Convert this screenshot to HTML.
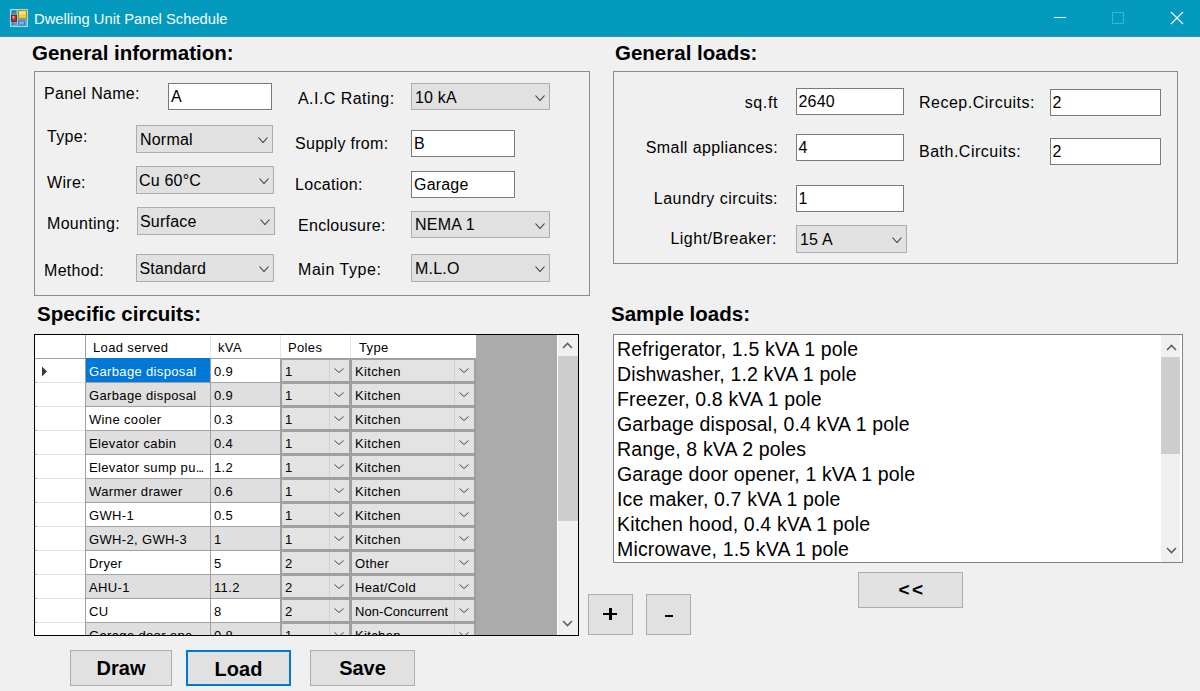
<!DOCTYPE html>
<html><head><meta charset="utf-8">
<style>
*{box-sizing:border-box;margin:0;padding:0}
html,body{width:1200px;height:691px;overflow:hidden;background:#f0f0f0;font-family:"Liberation Sans",sans-serif;color:#000}
.a{position:absolute;white-space:nowrap;line-height:1.15}
.h{font-weight:bold;font-size:20.5px}
.grp{border:1px solid #8c8c8c}
.tb{background:#fff;border:1px solid #7a7a7a}
.cb{background:#e1e1e1;border:1px solid #adadad}
.btn{background:#e1e1e1;border:1px solid #adadad;font-weight:bold;text-align:center}
.focus{border:2px solid #0078d7}
.gc{position:absolute;font-size:13px;letter-spacing:.35px;line-height:1.15;white-space:nowrap;overflow:hidden}
</style></head><body>

<div class="a" style="left:0;top:0;width:1200px;height:36px;background:#049abd"></div>
<div class="a" style="left:0;top:36px;width:1200px;height:1px;background:#3f8ea3"></div>
<div class="a" style="left:0;top:37px;width:1200px;height:1px;background:#d6fafd"></div>
<svg class="a" style="left:9px;top:8px" width="20" height="20">
<rect x="1" y="1" width="18" height="18" fill="#4fb3d1"/>
<rect x="1.5" y="1.5" width="17" height="17" fill="none" stroke="#9fd9ea" stroke-width="1.1"/>
<path d="M8.5 2V18M2 6.5H8.5M2 13.5H18" stroke="#8ccfe3" stroke-width="1"/>
<rect x="3" y="2.5" width="4" height="3" fill="#1d8db3"/>
<rect x="9.5" y="2.5" width="8" height="8" fill="#f4cb3c" stroke="#b48d1c" stroke-width="1"/>
<rect x="10.5" y="3.5" width="6" height="3" fill="#fde48c"/>
<rect x="2.5" y="7" width="5" height="6.5" fill="#b92c28" stroke="#7e1715" stroke-width=".9"/>
<rect x="3.5" y="8" width="2" height="2.5" fill="#f59a93"/>
<rect x="9.5" y="13" width="6" height="4" fill="#80a9f2" stroke="#4a6cc0" stroke-width=".9"/>
<rect x="3" y="15" width="2" height="2" fill="#1d8db3"/>
<rect x="6" y="15" width="2" height="2" fill="#5aa0b8"/>
<rect x="16.5" y="13" width="1.5" height="4" fill="#6aaec6"/>
</svg>
<div class="a" style="left:34px;top:11px;font-size:14.75px;color:#f4fcff">Dwelling Unit Panel Schedule</div>
<div class="a" style="left:1054px;top:17px;width:12px;height:1px;background:#fff"></div>
<div class="a" style="left:1112px;top:12px;width:12px;height:12px;border:1px solid #3fb3cf"></div>
<svg class="a" style="left:1170px;top:11px" width="14" height="14"><path d="M1 1L13 13M13 1L1 13" stroke="#fff" stroke-width="1.1"/></svg>
<div class="a h" style="left:32px;top:41px">General information:</div>
<div class="a grp" style="left:34px;top:71px;width:556px;height:225px"></div>
<div class="a" style="left:44px;top:85px;font-size:16px;letter-spacing:0.3px;">Panel Name:</div>
<div class="a tb" style="left:168px;top:83px;width:104px;height:27px"><span class="a" style="left:2px;top:4px;font-size:16px;letter-spacing:.2px">A</span></div>
<div class="a" style="left:47px;top:128px;font-size:16px;letter-spacing:0.3px;">Type:</div>
<div class="a cb" style="left:136px;top:125px;width:137px;height:28px"><span class="a" style="left:3px;top:5px;font-size:16px;letter-spacing:.2px">Normal</span><div class="a" style="left:121px;top:11px"><svg width="10" height="6" style="display:block"><path d="M.5 .5L5.0 5.5L9.5 .5" fill="none" stroke="#3a3a3a" stroke-width="1.1"/></svg></div></div>
<div class="a" style="left:47px;top:174px;font-size:16px;letter-spacing:0.3px;">Wire:</div>
<div class="a cb" style="left:136px;top:166px;width:138px;height:28px"><span class="a" style="left:2px;top:5px;font-size:16px;letter-spacing:.2px">Cu 60°C</span><div class="a" style="left:122px;top:11px"><svg width="10" height="6" style="display:block"><path d="M.5 .5L5.0 5.5L9.5 .5" fill="none" stroke="#3a3a3a" stroke-width="1.1"/></svg></div></div>
<div class="a" style="left:47px;top:215px;font-size:16px;letter-spacing:0.3px;">Mounting:</div>
<div class="a cb" style="left:137px;top:207px;width:138px;height:28px"><span class="a" style="left:2px;top:5px;font-size:16px;letter-spacing:.2px">Surface</span><div class="a" style="left:122px;top:11px"><svg width="10" height="6" style="display:block"><path d="M.5 .5L5.0 5.5L9.5 .5" fill="none" stroke="#3a3a3a" stroke-width="1.1"/></svg></div></div>
<div class="a" style="left:44px;top:262px;font-size:16px;letter-spacing:0.3px;">Method:</div>
<div class="a cb" style="left:136px;top:254px;width:138px;height:28px"><span class="a" style="left:2.5px;top:5px;font-size:16px;letter-spacing:.2px">Standard</span><div class="a" style="left:122px;top:11px"><svg width="10" height="6" style="display:block"><path d="M.5 .5L5.0 5.5L9.5 .5" fill="none" stroke="#3a3a3a" stroke-width="1.1"/></svg></div></div>
<div class="a" style="left:298px;top:90px;font-size:16px;letter-spacing:0.45px;">A.I.C Rating:</div>
<div class="a cb" style="left:411px;top:83px;width:139px;height:27px"><span class="a" style="left:3px;top:5px;font-size:16px;letter-spacing:.2px">10 kA</span><div class="a" style="left:123px;top:11px"><svg width="10" height="6" style="display:block"><path d="M.5 .5L5.0 5.5L9.5 .5" fill="none" stroke="#3a3a3a" stroke-width="1.1"/></svg></div></div>
<div class="a" style="left:295px;top:135px;font-size:16px;letter-spacing:0.3px;">Supply from:</div>
<div class="a tb" style="left:411px;top:130px;width:104px;height:27px"><span class="a" style="left:2px;top:4px;font-size:16px;letter-spacing:.2px">B</span></div>
<div class="a" style="left:295px;top:176px;font-size:16px;letter-spacing:0.3px;">Location:</div>
<div class="a tb" style="left:411px;top:171px;width:104px;height:27px"><span class="a" style="left:2px;top:4px;font-size:16px;letter-spacing:.2px">Garage</span></div>
<div class="a" style="left:298px;top:217px;font-size:16px;letter-spacing:0.3px;">Enclousure:</div>
<div class="a cb" style="left:411px;top:211px;width:139px;height:27px"><span class="a" style="left:3px;top:4px;font-size:16px;letter-spacing:.2px">NEMA 1</span><div class="a" style="left:123px;top:11px"><svg width="10" height="6" style="display:block"><path d="M.5 .5L5.0 5.5L9.5 .5" fill="none" stroke="#3a3a3a" stroke-width="1.1"/></svg></div></div>
<div class="a" style="left:298px;top:261px;font-size:16px;letter-spacing:0.55px;">Main Type:</div>
<div class="a cb" style="left:411px;top:254px;width:139px;height:28px"><span class="a" style="left:3px;top:5px;font-size:16px;letter-spacing:.2px">M.L.O</span><div class="a" style="left:123px;top:11px"><svg width="10" height="6" style="display:block"><path d="M.5 .5L5.0 5.5L9.5 .5" fill="none" stroke="#3a3a3a" stroke-width="1.1"/></svg></div></div>
<div class="a h" style="left:615px;top:41px">General loads:</div>
<div class="a grp" style="left:613px;top:71px;width:565px;height:193px"></div>
<div class="a" style="right:422px;top:94px;font-size:16px;letter-spacing:0.6px">sq.ft</div>
<div class="a tb" style="left:796px;top:88px;width:108px;height:27px"><span class="a" style="left:1.5px;top:4px;font-size:16px;letter-spacing:.2px">2640</span></div>
<div class="a" style="right:422px;top:139px;font-size:16px;letter-spacing:0.4px">Small appliances:</div>
<div class="a tb" style="left:796px;top:134px;width:108px;height:27px"><span class="a" style="left:1.5px;top:4px;font-size:16px;letter-spacing:.2px">4</span></div>
<div class="a" style="right:422px;top:190px;font-size:16px;letter-spacing:0.45px">Laundry circuits:</div>
<div class="a tb" style="left:796px;top:185px;width:108px;height:27px"><span class="a" style="left:1.5px;top:4px;font-size:16px;letter-spacing:.2px">1</span></div>
<div class="a" style="right:423px;top:230px;font-size:16px;letter-spacing:0.5px">Light/Breaker:</div>
<div class="a cb" style="left:796px;top:225px;width:111px;height:28px"><span class="a" style="left:3px;top:5px;font-size:16px;letter-spacing:.2px">15 A</span><div class="a" style="left:95px;top:11px"><svg width="10" height="6" style="display:block"><path d="M.5 .5L5.0 5.5L9.5 .5" fill="none" stroke="#3a3a3a" stroke-width="1.1"/></svg></div></div>
<div class="a" style="left:919px;top:94px;font-size:16px;letter-spacing:0.5px;">Recep.Circuits:</div>
<div class="a tb" style="left:1050px;top:89px;width:111px;height:27px"><span class="a" style="left:1.5px;top:4px;font-size:16px;letter-spacing:.2px">2</span></div>
<div class="a" style="left:919px;top:143px;font-size:16px;letter-spacing:0.5px;">Bath.Circuits:</div>
<div class="a tb" style="left:1050px;top:138px;width:111px;height:27px"><span class="a" style="left:1.5px;top:4px;font-size:16px;letter-spacing:.2px">2</span></div>
<div class="a h" style="left:37px;top:302px">Specific circuits:</div>
<div class="a" style="left:34px;top:334px;width:545px;height:302px;border:1px solid #000;background:#ababab;overflow:hidden"><div class="a" style="left:0px;top:0px;width:441px;height:23px;background:#fff"></div><div class="a" style="left:0px;top:23px;width:441px;height:1px;background:#a0a0a0"></div><div class="a" style="left:50px;top:0px;width:1px;height:23px;background:#a0a0a0"></div><div class="a" style="left:175px;top:0px;width:1px;height:23px;background:#e5e5e5"></div><div class="a" style="left:245px;top:0px;width:1px;height:23px;background:#e5e5e5"></div><div class="a" style="left:315px;top:0px;width:1px;height:23px;background:#e5e5e5"></div><div class="gc" style="left:58px;top:6px;color:#000;">Load served</div><div class="gc" style="left:183px;top:6px;color:#000;">kVA</div><div class="gc" style="left:253px;top:6px;color:#000;">Poles</div><div class="gc" style="left:324px;top:6px;color:#000;">Type</div><div class="a" style="left:0px;top:24px;width:50px;height:23px;background:#fff"></div><div class="a" style="left:2px;top:47px;width:48px;height:1px;background:#e3e3e3"></div><div class="a" style="left:50px;top:24px;width:1px;height:24px;background:#a0a0a0"></div><div class="a" style="left:51px;top:23px;width:124px;height:24px;background:#0078d7"></div><div class="gc" style="left:54px;top:30px;color:#fff;">Garbage disposal</div><div class="a" style="left:51px;top:47px;width:390px;height:1px;background:#a0a0a0"></div><div class="a" style="left:175px;top:24px;width:1px;height:24px;background:#a0a0a0"></div><div class="a" style="left:176px;top:24px;width:69px;height:23px;background:#fff"></div><div class="gc" style="left:179px;top:30px;color:#000;">0.9</div><div class="a" style="left:245px;top:24px;width:1px;height:24px;background:#a0a0a0"></div><div class="a" style="left:315px;top:24px;width:1px;height:24px;background:#a0a0a0"></div><div class="a" style="left:440px;top:24px;width:1px;height:24px;background:#a0a0a0"></div><div class="a" style="left:246px;top:24px;width:69px;height:23px;background:#e3e3e3;border:1px solid #a0a0a0"></div><div class="a" style="left:294px;top:25px;width:1px;height:21px;background:#cfcfcf"></div><div class="gc" style="left:250px;top:30px;color:#000;">1</div><div class="a" style="left:299px;top:33px"><svg width="10" height="5" style="display:block"><path d="M.5 .5L5.0 4.5L9.5 .5" fill="none" stroke="#444" stroke-width="1"/></svg></div><div class="a" style="left:316px;top:24px;width:124px;height:23px;background:#e3e3e3;border:1px solid #a0a0a0"></div><div class="a" style="left:419px;top:25px;width:1px;height:21px;background:#cfcfcf"></div><div class="gc" style="left:320px;top:30px;color:#000;">Kitchen</div><div class="a" style="left:424px;top:33px"><svg width="10" height="5" style="display:block"><path d="M.5 .5L5.0 4.5L9.5 .5" fill="none" stroke="#444" stroke-width="1"/></svg></div><svg class="a" style="left:7px;top:31px" width="6" height="11"><path d="M0 .5L5 5.5L0 10.5Z" fill="#3c3c3c"/></svg><div class="a" style="left:0px;top:48px;width:50px;height:23px;background:#fff"></div><div class="a" style="left:2px;top:71px;width:48px;height:1px;background:#e3e3e3"></div><div class="a" style="left:50px;top:48px;width:1px;height:24px;background:#a0a0a0"></div><div class="a" style="left:51px;top:48px;width:124px;height:23px;background:#dfdfdf"></div><div class="gc" style="left:54px;top:54px;color:#000;width:118px;">Garbage disposal</div><div class="a" style="left:51px;top:71px;width:390px;height:1px;background:#a0a0a0"></div><div class="a" style="left:175px;top:48px;width:1px;height:24px;background:#a0a0a0"></div><div class="a" style="left:176px;top:48px;width:69px;height:23px;background:#dfdfdf"></div><div class="gc" style="left:179px;top:54px;color:#000;">0.9</div><div class="a" style="left:245px;top:48px;width:1px;height:24px;background:#a0a0a0"></div><div class="a" style="left:315px;top:48px;width:1px;height:24px;background:#a0a0a0"></div><div class="a" style="left:440px;top:48px;width:1px;height:24px;background:#a0a0a0"></div><div class="a" style="left:246px;top:48px;width:69px;height:23px;background:#e3e3e3;border:1px solid #a0a0a0"></div><div class="a" style="left:294px;top:49px;width:1px;height:21px;background:#cfcfcf"></div><div class="gc" style="left:250px;top:54px;color:#000;">1</div><div class="a" style="left:299px;top:57px"><svg width="10" height="5" style="display:block"><path d="M.5 .5L5.0 4.5L9.5 .5" fill="none" stroke="#444" stroke-width="1"/></svg></div><div class="a" style="left:316px;top:48px;width:124px;height:23px;background:#e3e3e3;border:1px solid #a0a0a0"></div><div class="a" style="left:419px;top:49px;width:1px;height:21px;background:#cfcfcf"></div><div class="gc" style="left:320px;top:54px;color:#000;">Kitchen</div><div class="a" style="left:424px;top:57px"><svg width="10" height="5" style="display:block"><path d="M.5 .5L5.0 4.5L9.5 .5" fill="none" stroke="#444" stroke-width="1"/></svg></div><div class="a" style="left:0px;top:72px;width:50px;height:23px;background:#fff"></div><div class="a" style="left:2px;top:95px;width:48px;height:1px;background:#e3e3e3"></div><div class="a" style="left:50px;top:72px;width:1px;height:24px;background:#a0a0a0"></div><div class="a" style="left:51px;top:72px;width:124px;height:23px;background:#fff"></div><div class="gc" style="left:54px;top:78px;color:#000;width:118px;">Wine cooler</div><div class="a" style="left:51px;top:95px;width:390px;height:1px;background:#a0a0a0"></div><div class="a" style="left:175px;top:72px;width:1px;height:24px;background:#a0a0a0"></div><div class="a" style="left:176px;top:72px;width:69px;height:23px;background:#fff"></div><div class="gc" style="left:179px;top:78px;color:#000;">0.3</div><div class="a" style="left:245px;top:72px;width:1px;height:24px;background:#a0a0a0"></div><div class="a" style="left:315px;top:72px;width:1px;height:24px;background:#a0a0a0"></div><div class="a" style="left:440px;top:72px;width:1px;height:24px;background:#a0a0a0"></div><div class="a" style="left:246px;top:72px;width:69px;height:23px;background:#e3e3e3;border:1px solid #a0a0a0"></div><div class="a" style="left:294px;top:73px;width:1px;height:21px;background:#cfcfcf"></div><div class="gc" style="left:250px;top:78px;color:#000;">1</div><div class="a" style="left:299px;top:81px"><svg width="10" height="5" style="display:block"><path d="M.5 .5L5.0 4.5L9.5 .5" fill="none" stroke="#444" stroke-width="1"/></svg></div><div class="a" style="left:316px;top:72px;width:124px;height:23px;background:#e3e3e3;border:1px solid #a0a0a0"></div><div class="a" style="left:419px;top:73px;width:1px;height:21px;background:#cfcfcf"></div><div class="gc" style="left:320px;top:78px;color:#000;">Kitchen</div><div class="a" style="left:424px;top:81px"><svg width="10" height="5" style="display:block"><path d="M.5 .5L5.0 4.5L9.5 .5" fill="none" stroke="#444" stroke-width="1"/></svg></div><div class="a" style="left:0px;top:96px;width:50px;height:23px;background:#fff"></div><div class="a" style="left:2px;top:119px;width:48px;height:1px;background:#e3e3e3"></div><div class="a" style="left:50px;top:96px;width:1px;height:24px;background:#a0a0a0"></div><div class="a" style="left:51px;top:96px;width:124px;height:23px;background:#dfdfdf"></div><div class="gc" style="left:54px;top:102px;color:#000;width:118px;">Elevator cabin</div><div class="a" style="left:51px;top:119px;width:390px;height:1px;background:#a0a0a0"></div><div class="a" style="left:175px;top:96px;width:1px;height:24px;background:#a0a0a0"></div><div class="a" style="left:176px;top:96px;width:69px;height:23px;background:#dfdfdf"></div><div class="gc" style="left:179px;top:102px;color:#000;">0.4</div><div class="a" style="left:245px;top:96px;width:1px;height:24px;background:#a0a0a0"></div><div class="a" style="left:315px;top:96px;width:1px;height:24px;background:#a0a0a0"></div><div class="a" style="left:440px;top:96px;width:1px;height:24px;background:#a0a0a0"></div><div class="a" style="left:246px;top:96px;width:69px;height:23px;background:#e3e3e3;border:1px solid #a0a0a0"></div><div class="a" style="left:294px;top:97px;width:1px;height:21px;background:#cfcfcf"></div><div class="gc" style="left:250px;top:102px;color:#000;">1</div><div class="a" style="left:299px;top:105px"><svg width="10" height="5" style="display:block"><path d="M.5 .5L5.0 4.5L9.5 .5" fill="none" stroke="#444" stroke-width="1"/></svg></div><div class="a" style="left:316px;top:96px;width:124px;height:23px;background:#e3e3e3;border:1px solid #a0a0a0"></div><div class="a" style="left:419px;top:97px;width:1px;height:21px;background:#cfcfcf"></div><div class="gc" style="left:320px;top:102px;color:#000;">Kitchen</div><div class="a" style="left:424px;top:105px"><svg width="10" height="5" style="display:block"><path d="M.5 .5L5.0 4.5L9.5 .5" fill="none" stroke="#444" stroke-width="1"/></svg></div><div class="a" style="left:0px;top:120px;width:50px;height:23px;background:#fff"></div><div class="a" style="left:2px;top:143px;width:48px;height:1px;background:#e3e3e3"></div><div class="a" style="left:50px;top:120px;width:1px;height:24px;background:#a0a0a0"></div><div class="a" style="left:51px;top:120px;width:124px;height:23px;background:#fff"></div><div class="gc" style="left:54px;top:126px;color:#000;width:118px;">Elevator sump pu<span style="letter-spacing:-1.2px">...</span></div><div class="a" style="left:51px;top:143px;width:390px;height:1px;background:#a0a0a0"></div><div class="a" style="left:175px;top:120px;width:1px;height:24px;background:#a0a0a0"></div><div class="a" style="left:176px;top:120px;width:69px;height:23px;background:#fff"></div><div class="gc" style="left:179px;top:126px;color:#000;">1.2</div><div class="a" style="left:245px;top:120px;width:1px;height:24px;background:#a0a0a0"></div><div class="a" style="left:315px;top:120px;width:1px;height:24px;background:#a0a0a0"></div><div class="a" style="left:440px;top:120px;width:1px;height:24px;background:#a0a0a0"></div><div class="a" style="left:246px;top:120px;width:69px;height:23px;background:#e3e3e3;border:1px solid #a0a0a0"></div><div class="a" style="left:294px;top:121px;width:1px;height:21px;background:#cfcfcf"></div><div class="gc" style="left:250px;top:126px;color:#000;">1</div><div class="a" style="left:299px;top:129px"><svg width="10" height="5" style="display:block"><path d="M.5 .5L5.0 4.5L9.5 .5" fill="none" stroke="#444" stroke-width="1"/></svg></div><div class="a" style="left:316px;top:120px;width:124px;height:23px;background:#e3e3e3;border:1px solid #a0a0a0"></div><div class="a" style="left:419px;top:121px;width:1px;height:21px;background:#cfcfcf"></div><div class="gc" style="left:320px;top:126px;color:#000;">Kitchen</div><div class="a" style="left:424px;top:129px"><svg width="10" height="5" style="display:block"><path d="M.5 .5L5.0 4.5L9.5 .5" fill="none" stroke="#444" stroke-width="1"/></svg></div><div class="a" style="left:0px;top:144px;width:50px;height:23px;background:#fff"></div><div class="a" style="left:2px;top:167px;width:48px;height:1px;background:#e3e3e3"></div><div class="a" style="left:50px;top:144px;width:1px;height:24px;background:#a0a0a0"></div><div class="a" style="left:51px;top:144px;width:124px;height:23px;background:#dfdfdf"></div><div class="gc" style="left:54px;top:150px;color:#000;width:118px;">Warmer drawer</div><div class="a" style="left:51px;top:167px;width:390px;height:1px;background:#a0a0a0"></div><div class="a" style="left:175px;top:144px;width:1px;height:24px;background:#a0a0a0"></div><div class="a" style="left:176px;top:144px;width:69px;height:23px;background:#dfdfdf"></div><div class="gc" style="left:179px;top:150px;color:#000;">0.6</div><div class="a" style="left:245px;top:144px;width:1px;height:24px;background:#a0a0a0"></div><div class="a" style="left:315px;top:144px;width:1px;height:24px;background:#a0a0a0"></div><div class="a" style="left:440px;top:144px;width:1px;height:24px;background:#a0a0a0"></div><div class="a" style="left:246px;top:144px;width:69px;height:23px;background:#e3e3e3;border:1px solid #a0a0a0"></div><div class="a" style="left:294px;top:145px;width:1px;height:21px;background:#cfcfcf"></div><div class="gc" style="left:250px;top:150px;color:#000;">1</div><div class="a" style="left:299px;top:153px"><svg width="10" height="5" style="display:block"><path d="M.5 .5L5.0 4.5L9.5 .5" fill="none" stroke="#444" stroke-width="1"/></svg></div><div class="a" style="left:316px;top:144px;width:124px;height:23px;background:#e3e3e3;border:1px solid #a0a0a0"></div><div class="a" style="left:419px;top:145px;width:1px;height:21px;background:#cfcfcf"></div><div class="gc" style="left:320px;top:150px;color:#000;">Kitchen</div><div class="a" style="left:424px;top:153px"><svg width="10" height="5" style="display:block"><path d="M.5 .5L5.0 4.5L9.5 .5" fill="none" stroke="#444" stroke-width="1"/></svg></div><div class="a" style="left:0px;top:168px;width:50px;height:23px;background:#fff"></div><div class="a" style="left:2px;top:191px;width:48px;height:1px;background:#e3e3e3"></div><div class="a" style="left:50px;top:168px;width:1px;height:24px;background:#a0a0a0"></div><div class="a" style="left:51px;top:168px;width:124px;height:23px;background:#fff"></div><div class="gc" style="left:54px;top:174px;color:#000;width:118px;">GWH-1</div><div class="a" style="left:51px;top:191px;width:390px;height:1px;background:#a0a0a0"></div><div class="a" style="left:175px;top:168px;width:1px;height:24px;background:#a0a0a0"></div><div class="a" style="left:176px;top:168px;width:69px;height:23px;background:#fff"></div><div class="gc" style="left:179px;top:174px;color:#000;">0.5</div><div class="a" style="left:245px;top:168px;width:1px;height:24px;background:#a0a0a0"></div><div class="a" style="left:315px;top:168px;width:1px;height:24px;background:#a0a0a0"></div><div class="a" style="left:440px;top:168px;width:1px;height:24px;background:#a0a0a0"></div><div class="a" style="left:246px;top:168px;width:69px;height:23px;background:#e3e3e3;border:1px solid #a0a0a0"></div><div class="a" style="left:294px;top:169px;width:1px;height:21px;background:#cfcfcf"></div><div class="gc" style="left:250px;top:174px;color:#000;">1</div><div class="a" style="left:299px;top:177px"><svg width="10" height="5" style="display:block"><path d="M.5 .5L5.0 4.5L9.5 .5" fill="none" stroke="#444" stroke-width="1"/></svg></div><div class="a" style="left:316px;top:168px;width:124px;height:23px;background:#e3e3e3;border:1px solid #a0a0a0"></div><div class="a" style="left:419px;top:169px;width:1px;height:21px;background:#cfcfcf"></div><div class="gc" style="left:320px;top:174px;color:#000;">Kitchen</div><div class="a" style="left:424px;top:177px"><svg width="10" height="5" style="display:block"><path d="M.5 .5L5.0 4.5L9.5 .5" fill="none" stroke="#444" stroke-width="1"/></svg></div><div class="a" style="left:0px;top:192px;width:50px;height:23px;background:#fff"></div><div class="a" style="left:2px;top:215px;width:48px;height:1px;background:#e3e3e3"></div><div class="a" style="left:50px;top:192px;width:1px;height:24px;background:#a0a0a0"></div><div class="a" style="left:51px;top:192px;width:124px;height:23px;background:#dfdfdf"></div><div class="gc" style="left:54px;top:198px;color:#000;width:118px;">GWH-2, GWH-3</div><div class="a" style="left:51px;top:215px;width:390px;height:1px;background:#a0a0a0"></div><div class="a" style="left:175px;top:192px;width:1px;height:24px;background:#a0a0a0"></div><div class="a" style="left:176px;top:192px;width:69px;height:23px;background:#dfdfdf"></div><div class="gc" style="left:179px;top:198px;color:#000;">1</div><div class="a" style="left:245px;top:192px;width:1px;height:24px;background:#a0a0a0"></div><div class="a" style="left:315px;top:192px;width:1px;height:24px;background:#a0a0a0"></div><div class="a" style="left:440px;top:192px;width:1px;height:24px;background:#a0a0a0"></div><div class="a" style="left:246px;top:192px;width:69px;height:23px;background:#e3e3e3;border:1px solid #a0a0a0"></div><div class="a" style="left:294px;top:193px;width:1px;height:21px;background:#cfcfcf"></div><div class="gc" style="left:250px;top:198px;color:#000;">1</div><div class="a" style="left:299px;top:201px"><svg width="10" height="5" style="display:block"><path d="M.5 .5L5.0 4.5L9.5 .5" fill="none" stroke="#444" stroke-width="1"/></svg></div><div class="a" style="left:316px;top:192px;width:124px;height:23px;background:#e3e3e3;border:1px solid #a0a0a0"></div><div class="a" style="left:419px;top:193px;width:1px;height:21px;background:#cfcfcf"></div><div class="gc" style="left:320px;top:198px;color:#000;">Kitchen</div><div class="a" style="left:424px;top:201px"><svg width="10" height="5" style="display:block"><path d="M.5 .5L5.0 4.5L9.5 .5" fill="none" stroke="#444" stroke-width="1"/></svg></div><div class="a" style="left:0px;top:216px;width:50px;height:23px;background:#fff"></div><div class="a" style="left:2px;top:239px;width:48px;height:1px;background:#e3e3e3"></div><div class="a" style="left:50px;top:216px;width:1px;height:24px;background:#a0a0a0"></div><div class="a" style="left:51px;top:216px;width:124px;height:23px;background:#fff"></div><div class="gc" style="left:54px;top:222px;color:#000;width:118px;">Dryer</div><div class="a" style="left:51px;top:239px;width:390px;height:1px;background:#a0a0a0"></div><div class="a" style="left:175px;top:216px;width:1px;height:24px;background:#a0a0a0"></div><div class="a" style="left:176px;top:216px;width:69px;height:23px;background:#fff"></div><div class="gc" style="left:179px;top:222px;color:#000;">5</div><div class="a" style="left:245px;top:216px;width:1px;height:24px;background:#a0a0a0"></div><div class="a" style="left:315px;top:216px;width:1px;height:24px;background:#a0a0a0"></div><div class="a" style="left:440px;top:216px;width:1px;height:24px;background:#a0a0a0"></div><div class="a" style="left:246px;top:216px;width:69px;height:23px;background:#e3e3e3;border:1px solid #a0a0a0"></div><div class="a" style="left:294px;top:217px;width:1px;height:21px;background:#cfcfcf"></div><div class="gc" style="left:250px;top:222px;color:#000;">2</div><div class="a" style="left:299px;top:225px"><svg width="10" height="5" style="display:block"><path d="M.5 .5L5.0 4.5L9.5 .5" fill="none" stroke="#444" stroke-width="1"/></svg></div><div class="a" style="left:316px;top:216px;width:124px;height:23px;background:#e3e3e3;border:1px solid #a0a0a0"></div><div class="a" style="left:419px;top:217px;width:1px;height:21px;background:#cfcfcf"></div><div class="gc" style="left:320px;top:222px;color:#000;">Other</div><div class="a" style="left:424px;top:225px"><svg width="10" height="5" style="display:block"><path d="M.5 .5L5.0 4.5L9.5 .5" fill="none" stroke="#444" stroke-width="1"/></svg></div><div class="a" style="left:0px;top:240px;width:50px;height:23px;background:#fff"></div><div class="a" style="left:2px;top:263px;width:48px;height:1px;background:#e3e3e3"></div><div class="a" style="left:50px;top:240px;width:1px;height:24px;background:#a0a0a0"></div><div class="a" style="left:51px;top:240px;width:124px;height:23px;background:#dfdfdf"></div><div class="gc" style="left:54px;top:246px;color:#000;width:118px;">AHU-1</div><div class="a" style="left:51px;top:263px;width:390px;height:1px;background:#a0a0a0"></div><div class="a" style="left:175px;top:240px;width:1px;height:24px;background:#a0a0a0"></div><div class="a" style="left:176px;top:240px;width:69px;height:23px;background:#dfdfdf"></div><div class="gc" style="left:179px;top:246px;color:#000;">11.2</div><div class="a" style="left:245px;top:240px;width:1px;height:24px;background:#a0a0a0"></div><div class="a" style="left:315px;top:240px;width:1px;height:24px;background:#a0a0a0"></div><div class="a" style="left:440px;top:240px;width:1px;height:24px;background:#a0a0a0"></div><div class="a" style="left:246px;top:240px;width:69px;height:23px;background:#e3e3e3;border:1px solid #a0a0a0"></div><div class="a" style="left:294px;top:241px;width:1px;height:21px;background:#cfcfcf"></div><div class="gc" style="left:250px;top:246px;color:#000;">2</div><div class="a" style="left:299px;top:249px"><svg width="10" height="5" style="display:block"><path d="M.5 .5L5.0 4.5L9.5 .5" fill="none" stroke="#444" stroke-width="1"/></svg></div><div class="a" style="left:316px;top:240px;width:124px;height:23px;background:#e3e3e3;border:1px solid #a0a0a0"></div><div class="a" style="left:419px;top:241px;width:1px;height:21px;background:#cfcfcf"></div><div class="gc" style="left:320px;top:246px;color:#000;">Heat/Cold</div><div class="a" style="left:424px;top:249px"><svg width="10" height="5" style="display:block"><path d="M.5 .5L5.0 4.5L9.5 .5" fill="none" stroke="#444" stroke-width="1"/></svg></div><div class="a" style="left:0px;top:264px;width:50px;height:23px;background:#fff"></div><div class="a" style="left:2px;top:287px;width:48px;height:1px;background:#e3e3e3"></div><div class="a" style="left:50px;top:264px;width:1px;height:24px;background:#a0a0a0"></div><div class="a" style="left:51px;top:264px;width:124px;height:23px;background:#fff"></div><div class="gc" style="left:54px;top:270px;color:#000;width:118px;">CU</div><div class="a" style="left:51px;top:287px;width:390px;height:1px;background:#a0a0a0"></div><div class="a" style="left:175px;top:264px;width:1px;height:24px;background:#a0a0a0"></div><div class="a" style="left:176px;top:264px;width:69px;height:23px;background:#fff"></div><div class="gc" style="left:179px;top:270px;color:#000;">8</div><div class="a" style="left:245px;top:264px;width:1px;height:24px;background:#a0a0a0"></div><div class="a" style="left:315px;top:264px;width:1px;height:24px;background:#a0a0a0"></div><div class="a" style="left:440px;top:264px;width:1px;height:24px;background:#a0a0a0"></div><div class="a" style="left:246px;top:264px;width:69px;height:23px;background:#e3e3e3;border:1px solid #a0a0a0"></div><div class="a" style="left:294px;top:265px;width:1px;height:21px;background:#cfcfcf"></div><div class="gc" style="left:250px;top:270px;color:#000;">2</div><div class="a" style="left:299px;top:273px"><svg width="10" height="5" style="display:block"><path d="M.5 .5L5.0 4.5L9.5 .5" fill="none" stroke="#444" stroke-width="1"/></svg></div><div class="a" style="left:316px;top:264px;width:124px;height:23px;background:#e3e3e3;border:1px solid #a0a0a0"></div><div class="a" style="left:419px;top:265px;width:1px;height:21px;background:#cfcfcf"></div><div class="gc" style="left:320px;top:270px;color:#000;"><span style="letter-spacing:.05px">Non-Concurrent</span></div><div class="a" style="left:424px;top:273px"><svg width="10" height="5" style="display:block"><path d="M.5 .5L5.0 4.5L9.5 .5" fill="none" stroke="#444" stroke-width="1"/></svg></div><div class="a" style="left:0px;top:288px;width:50px;height:23px;background:#fff"></div><div class="a" style="left:2px;top:311px;width:48px;height:1px;background:#e3e3e3"></div><div class="a" style="left:50px;top:288px;width:1px;height:24px;background:#a0a0a0"></div><div class="a" style="left:51px;top:288px;width:124px;height:23px;background:#dfdfdf"></div><div class="gc" style="left:54px;top:294px;color:#000;width:118px;">Garage door ope<span style="letter-spacing:-1.2px">...</span></div><div class="a" style="left:51px;top:311px;width:390px;height:1px;background:#a0a0a0"></div><div class="a" style="left:175px;top:288px;width:1px;height:24px;background:#a0a0a0"></div><div class="a" style="left:176px;top:288px;width:69px;height:23px;background:#dfdfdf"></div><div class="gc" style="left:179px;top:294px;color:#000;">0.8</div><div class="a" style="left:245px;top:288px;width:1px;height:24px;background:#a0a0a0"></div><div class="a" style="left:315px;top:288px;width:1px;height:24px;background:#a0a0a0"></div><div class="a" style="left:440px;top:288px;width:1px;height:24px;background:#a0a0a0"></div><div class="a" style="left:246px;top:288px;width:69px;height:23px;background:#e3e3e3;border:1px solid #a0a0a0"></div><div class="a" style="left:294px;top:289px;width:1px;height:21px;background:#cfcfcf"></div><div class="gc" style="left:250px;top:294px;color:#000;">1</div><div class="a" style="left:299px;top:297px"><svg width="10" height="5" style="display:block"><path d="M.5 .5L5.0 4.5L9.5 .5" fill="none" stroke="#444" stroke-width="1"/></svg></div><div class="a" style="left:316px;top:288px;width:124px;height:23px;background:#e3e3e3;border:1px solid #a0a0a0"></div><div class="a" style="left:419px;top:289px;width:1px;height:21px;background:#cfcfcf"></div><div class="gc" style="left:320px;top:294px;color:#000;">Kitchen</div><div class="a" style="left:424px;top:297px"><svg width="10" height="5" style="display:block"><path d="M.5 .5L5.0 4.5L9.5 .5" fill="none" stroke="#444" stroke-width="1"/></svg></div><div class="a" style="left:522px;top:0px;width:1px;height:300px;background:#fff"></div><div class="a" style="left:523px;top:0px;width:20px;height:300px;background:#f0f0f0"></div><div class="a" style="left:523px;top:21px;width:20px;height:165px;background:#cdcdcd"></div><svg class="a" style="left:527px;top:7px" width="11" height="7"><path d="M1 6L5.5 1.5L10 6" fill="none" stroke="#606060" stroke-width="1.6"/></svg><svg class="a" style="left:527px;top:285px" width="11" height="7"><path d="M1 1L5.5 5.5L10 1" fill="none" stroke="#606060" stroke-width="1.6"/></svg></div>
<div class="a h" style="left:611px;top:302px">Sample loads:</div>
<div class="a" style="left:613px;top:334px;width:570px;height:229px;border:1px solid #828282;background:#fff;overflow:hidden"><div class="a" style="left:3px;top:3px;font-size:19.5px;letter-spacing:.15px">Refrigerator, 1.5 kVA 1 pole</div><div class="a" style="left:3px;top:28px;font-size:19.5px;letter-spacing:.15px">Dishwasher, 1.2 kVA 1 pole</div><div class="a" style="left:3px;top:53px;font-size:19.5px;letter-spacing:.15px">Freezer, 0.8 kVA 1 pole</div><div class="a" style="left:3px;top:78px;font-size:19.5px;letter-spacing:.15px">Garbage disposal, 0.4 kVA 1 pole</div><div class="a" style="left:3px;top:103px;font-size:19.5px;letter-spacing:.15px">Range, 8 kVA 2 poles</div><div class="a" style="left:3px;top:128px;font-size:19.5px;letter-spacing:.15px">Garage door opener, 1 kVA 1 pole</div><div class="a" style="left:3px;top:153px;font-size:19.5px;letter-spacing:.15px">Ice maker, 0.7 kVA 1 pole</div><div class="a" style="left:3px;top:178px;font-size:19.5px;letter-spacing:.15px">Kitchen hood, 0.4 kVA 1 pole</div><div class="a" style="left:3px;top:203px;font-size:19.5px;letter-spacing:.15px">Microwave, 1.5 kVA 1 pole</div><div class="a" style="left:547px;top:0;width:19px;height:227px;background:#f0f0f0"></div><div class="a" style="left:547px;top:22px;width:19px;height:97px;background:#cdcdcd"></div><svg class="a" style="left:552px;top:9px" width="11" height="7"><path d="M1 6L5.5 1.5L10 6" fill="none" stroke="#606060" stroke-width="1.6"/></svg><svg class="a" style="left:552px;top:212px" width="11" height="7"><path d="M1 1L5.5 5.5L10 1" fill="none" stroke="#606060" stroke-width="1.6"/></svg></div>
<div class="a btn" style="left:858px;top:572px;width:105px;height:36px;font-size:19px;line-height:34px"><span style="letter-spacing:2.5px;padding-left:3px">&lt;&lt;</span></div>
<div class="a btn" style="left:588px;top:594px;width:45px;height:41px;font-size:22px;line-height:39px"></div>
<div class="a btn" style="left:646px;top:594px;width:45px;height:41px;font-size:22px;line-height:39px"></div>
<div class="a" style="left:603px;top:613px;width:14px;height:2px;background:#000"></div>
<div class="a" style="left:609px;top:608px;width:3px;height:12px;background:#000"></div>
<div class="a" style="left:665px;top:615px;width:8px;height:2px;background:#000"></div>
<div class="a btn" style="left:70px;top:650px;width:102px;height:36px;font-size:20px;line-height:34px">Draw</div>
<div class="a btn focus" style="left:186px;top:650px;width:105px;height:36px;font-size:20px;line-height:34px">Load</div>
<div class="a btn" style="left:310px;top:650px;width:105px;height:36px;font-size:20px;line-height:34px">Save</div>
</body></html>
